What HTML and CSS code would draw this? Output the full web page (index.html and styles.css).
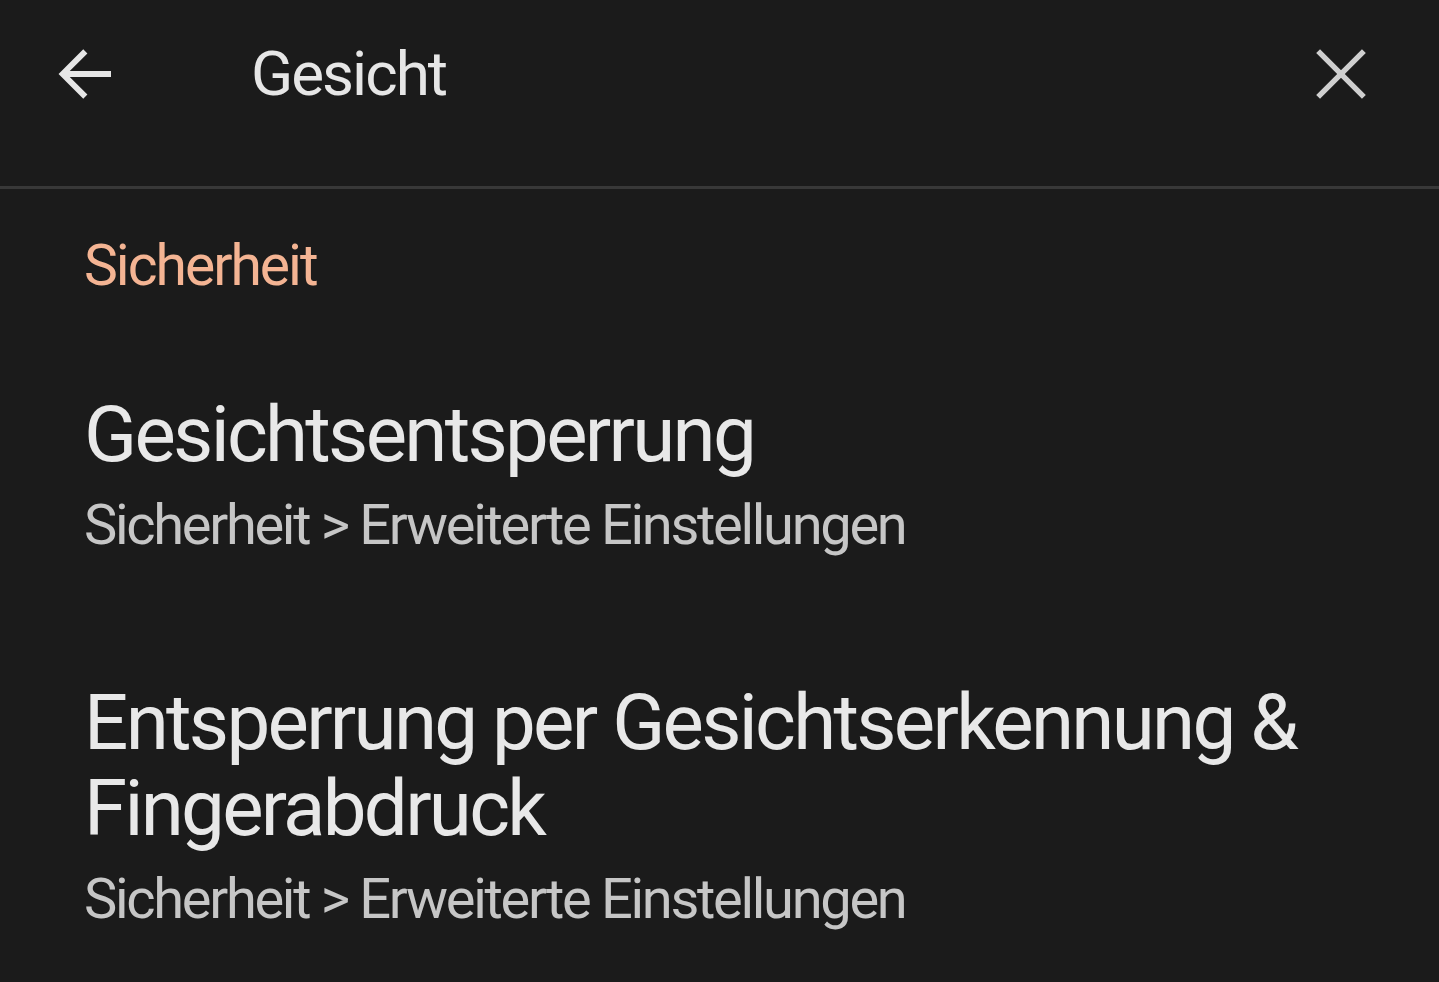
FILE: index.html
```html
<!DOCTYPE html>
<html>
<head>
  <title>Gesicht</title>
  <meta name="viewport" content="width=device-width, initial-scale=1">
  <link rel="stylesheet" href="styles.css">
</head>
<body>

  <div class="topbar">
    <button class="icon-btn back">
      <svg width="80" height="80" viewBox="0 0 24 24">
        <path d="M20.1 12H5.6M12.4 5.2L5.6 12l6.8 6.8" stroke="#e6e6e6" stroke-width="1.75" fill="none"/>
      </svg>
    </button>
    <div class="query">Gesicht</div>
    <button class="icon-btn close">
      <svg width="82" height="82" viewBox="0 0 24 24">
        <path d="M5.3 5.3L18.7 18.7M18.7 5.3L5.3 18.7" stroke="#cfcfcf" stroke-width="1.6" fill="none"/>
      </svg>
    </button>
  </div>

  <div class="results">
    <div class="category">Sicherheit</div>

    <div class="result first">
      <div class="result-title">Gesichtsentsperrung</div>
      <div class="result-path">Sicherheit &gt; Erweiterte Einstellungen</div>
    </div>

    <div class="result">
      <div class="result-title">Entsperrung per Gesichtserkennung &amp; Fingerabdruck</div>
      <div class="result-path">Sicherheit &gt; Erweiterte Einstellungen</div>
    </div>
  </div>

</body>
</html>
```

FILE: styles.css
```css
body {
  margin: 0;
  background-color: #1b1b1b;
  font-family: Roboto, "Noto Sans", sans-serif;
  color: #e6e6e6;
  overflow: hidden;
}
.topbar {
  display: flex;
  align-items: center;
  height: 189px;
  box-sizing: border-box;
  padding: 0 57px 38px 44px;
  border-bottom: 3px solid #383838;
}
.icon-btn {
  background: none;
  border: none;
  padding: 0;
  display: flex;
  cursor: pointer;
}
.query {
  flex: 1;
  margin-left: 127px;
  font-size: 62px;
  line-height: 70px;
  letter-spacing: -2px;
  color: #e6e6e6;
}
.results {
  padding: 42px 86px 0 84px;
}
.category {
  font-size: 57px;
  line-height: 70px;
  letter-spacing: -2px;
  color: #f4b493;
}
.result {
  margin-top: 120px;
}
.result.first {
  margin-top: 91px;
}
.result-title {
  font-size: 78px;
  line-height: 86px;
  letter-spacing: -2.7px;
  color: #e8e8e8;
  max-width: 1240px;
}
.result-path {
  margin-top: 12px;
  font-size: 56px;
  line-height: 70px;
  letter-spacing: -2.3px;
  color: #c6c6c6;
}
```
